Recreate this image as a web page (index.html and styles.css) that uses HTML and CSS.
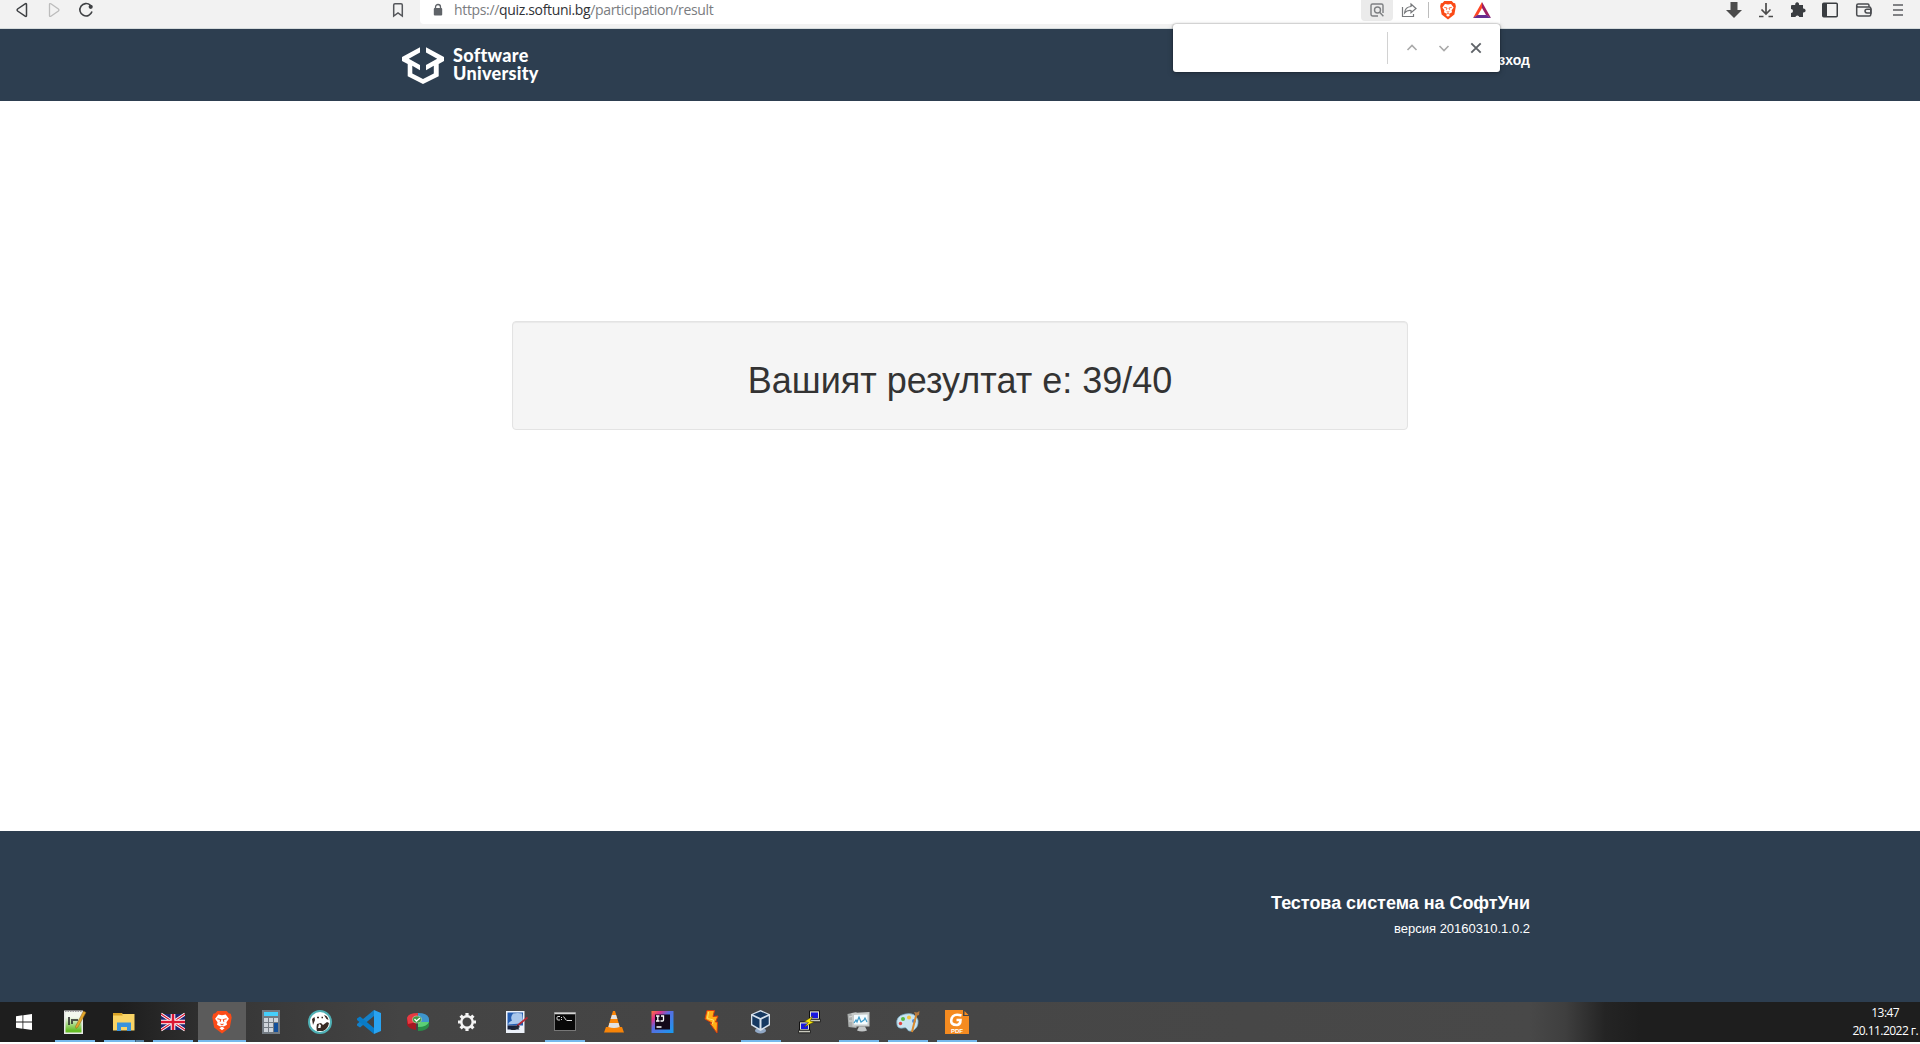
FILE: index.html
```html
<!DOCTYPE html>
<html lang="bg">
<head>
<meta charset="utf-8">
<title>Тестова система на СофтУни</title>
<link rel="stylesheet" href="styles.css">
</head>
<body>
<div class="toolbar">
  <div class="nav">
    <svg width="12" height="16" viewBox="0 0 12 16"><path d="M10.5 2.6v10.8q0 1.6-1.4.8L1.6 9q-1-1 0-2l7.5-5.2q1.4-.8 1.4.8z" fill="none" stroke="#3f4144" stroke-width="1.5"/></svg>
    <svg width="12" height="16" viewBox="0 0 12 16"><path d="M1.5 2.6v10.8q0 1.6 1.4.8L10.4 9q1-1 0-2L2.9 1.800q-1.400-.8-1.400.8z" fill="none" stroke="#bcbcbc" stroke-width="1.300"/></svg>
    <svg class="reload" width="16" height="16" viewBox="0 0 16 16"><path d="M12.300 3.200A6.200 6.200 0 1 0 14 9.600" fill="none" stroke="#3f4144" stroke-width="1.600"/><circle cx="12.700" cy="4.800" r="2.100" fill="#3f4144"/></svg>
  </div>
  <svg class="bookmark" width="12" height="16" viewBox="0 0 12 16"><path d="M1.700 14V3q0-1.300 1.300-1.300h6Q10.300 1.700 10.300 3v11L6 11z" fill="none" stroke="#55575b" stroke-width="1.500"/></svg>
  <div class="address">
    <svg class="lock" width="10" height="14" viewBox="0 0 10 14"><path d="M2.500 6V4a2.500 2.500 0 0 1 5 0v2" fill="none" stroke="#5f6368" stroke-width="1.300"/><rect x=".8" y="5" width="8.400" height="7.500" rx="1" fill="#5f6368"/></svg>
    <span class="url">https://<b>quiz.softuni.bg</b>/participation/result</span>
    <span class="find-toggle"><svg width="16" height="16" viewBox="0 0 16 16" fill="none" stroke="#7d7f82" stroke-width="1.400"><path d="M9 14H4Q2 14 2 12V3.500Q2 2 3.500 2h9Q14 2 14 3.500V11"/><circle cx="8.500" cy="8" r="3"/><path d="M10.600 10.200l3.800 4"/></svg></span>
    <svg class="share" width="16" height="16" viewBox="0 0 16 16" fill="none" stroke="#77797c" stroke-width="1.200"><path d="M1.500 5v9.500h11V12"/><path d="M10 2l5 4.500-5 4.300V8.500Q6 8 3.600 11 4 5 10 4.500z"/></svg>
    <i class="divider"></i>
    <svg class="brave" width="18" height="20" viewBox="0 0 24 26"><use href="#lion"/></svg>
    <svg class="bat" width="18" height="16" viewBox="0 0 18 16"><path d="M9 0L0 16l5-3 4-7z" fill="#ff4724"/><path d="M9 0l9 16-5-3-4-7z" fill="#9e1f63"/><path d="M0 16h18l-4.500-3h-9z" fill="#662d91"/></svg>
  </div>
  <div class="tools">
    <svg width="16" height="16" viewBox="0 0 16 16"><path d="M4.500 0h7v8H16l-8 8-8-8h4.500z" fill="#4b4b4b"/></svg>
    <svg width="16" height="16" viewBox="0 0 16 16" fill="none" stroke="#4b4b4b" stroke-width="1.700"><path d="M8 1v11M3.500 7.500L8 12l4.500-4.500"/><path d="M1 14.500h4.500M10.500 14.500H15"/></svg>
    <svg width="16" height="16" viewBox="0 0 16 16"><path d="M2 3h3.300a2 2 0 1 1 3.700 0H13v3.600a2 2 0 1 1 0 3.800V15H9.300a2 2 0 0 0-3.900 0H1v-4a2 2 0 0 0 0-4V4q0-1 1-1z" fill="#3a3d41"/></svg>
    <svg width="16" height="16" viewBox="0 0 16 16"><rect x=".75" y="1.250" width="14.500" height="13.500" rx="1" fill="none" stroke="#3a3d41" stroke-width="1.500"/><path d="M1 1h4v14H1z" fill="#3a3d41"/></svg>
    <svg class="wallet" width="18" height="16" viewBox="0 0 18 16" fill="none" stroke="#4a4c50" stroke-width="1.500"><path d="M1.700 3.500v9Q1.700 14 3.300 14h11q1.500 0 1.500-1.500v-6Q15.800 5 14.300 5H3.200Q1.700 5 1.700 3.500 1.700 2 3.200 2h9.600q1.200 0 1.200 1.500V5"/><path d="M16 7.300h-4q-2 0-2 1.800t2 1.800h4z"/></svg>
    <svg width="16" height="16" viewBox="0 0 16 16" stroke="#5c5e62" stroke-width="1.500"><path d="M3 3h10M3 8h10M3 13h10"/></svg>
  </div>
  <div class="find">
    <i></i>
    <svg width="12" height="12" viewBox="0 0 12 12" fill="none" stroke="#a9a9a9" stroke-width="1.600"><path d="M1.500 8L6 3.500 10.500 8"/></svg>
    <svg width="12" height="12" viewBox="0 0 12 12" fill="none" stroke="#a9a9a9" stroke-width="1.600"><path d="M1.500 4L6 8.500 10.500 4"/></svg>
    <svg width="12" height="12" viewBox="0 0 12 12" fill="none" stroke="#5f6368" stroke-width="1.900"><path d="M1.300 1.300l9.400 9.400M10.700 1.300l-9.400 9.400"/></svg>
  </div>
</div>

<header class="site-header">
  <div class="container">
    <a class="logo">
      <svg width="42" height="37" viewBox="0 0 42 37" fill="#fff"><path d="M18 .2v5.300L6.800 11.800 18 18v5.200l-7.700-4.400v7.600L21 32l10.800-5.600v-7.600L24 23.200V18l11.200-6.200L24 5.500V.2l18 9.700v4l-5.300 3v12.300L21 37 5.700 29.200V16.900L0 13.900v-4z"/></svg>
      <span>Software<br>University</span>
    </a>
    <a class="logout">Изход</a>
  </div>
</header>

<main><div class="well"><h1>Вашият резултат е: 39/40</h1></div></main>

<footer class="site-footer">
  <div class="container">
    <h4>Тестова система на СофтУни</h4>
    <p>версия 20160310.1.0.2</p>
  </div>
</footer>

<div class="taskbar">
  <div class="start"><svg width="16" height="16" viewBox="0 0 16 16" fill="#fff"><path d="M0 2.200l6.500-.9v6.200H0zM7.300 1.200L16 0v7.500H7.300zM0 8.400h6.500v6.300L0 13.800zM7.300 8.400H16V16l-8.700-1.200z"/></svg></div>
  <div class="task open"><svg viewBox="0 0 24 24"><defs><linearGradient id="gn" x2="0" y2="1"><stop offset=".25" stop-color="#f3f8ee"/><stop offset=".9" stop-color="#65bd26"/></linearGradient></defs><path d="M1 .5h19V24H1z" fill="#e7e7e7"/><path d="M2.500 2h16v20.500h-16z" fill="url(#gn)"/><path d="M2 1h17" stroke="#888" stroke-width="1.500" stroke-dasharray="1.500 1"/><path d="M6 7v8M9 9v5M10 10h5" stroke="#222" stroke-width="1.500"/><path d="M20.500 1L12.500 16.500l.5 2 2-1.500L23 2.500z" fill="#e3a62b" stroke="#8d651d" stroke-width=".5"/></svg></div>
  <div class="task open multi"><svg viewBox="0 0 24 24"><path d="M1 3h8.500l1.500 1H22.500v16.500H1z" fill="#f9d465"/><path d="M1 3h8.500l1.300 2.500H1z" fill="#d9a326"/><path d="M5 21v-8.500h14V21h-4v-4H9v4z" fill="#3993dc"/></svg></div>
  <div class="task open"><svg viewBox="0 0 24 24"><path d="M0 4h24v16H0z" fill="#1d2472"/><path d="M0 4l24 16M24 4L0 20" stroke="#fff" stroke-width="3"/><path d="M0 4l24 16M24 4L0 20" stroke="#db1733" stroke-width="1.200"/><path d="M12 4v16M0 12h24" stroke="#fff" stroke-width="4.600"/><path d="M12 4v16M0 12h24" stroke="#db1733" stroke-width="2.600"/></svg></div>
  <div class="task open active"><svg viewBox="0 0 24 26"><g id="lion"><path d="M7 1h10l2.300 2.500L21.500 4l1 4-2 11L12 25.500 3.500 19l-2-11 1-4 2.200-.5z" fill="#fb4b17"/><path d="M8 5l4 .8L16 5l3.500 4.500-2.700 3.800.6 2.700-3.400 2-2-1-2 1-3.400-2 .6-2.700L4.500 9.500zM12 18l2.800 1.800L12 22l-2.800-2.200z" fill="#fff"/><path d="M7 9.500l3.700.8-.8 2.400M17 9.500l-3.700.8.800 2.400M10.300 15l1.700 1 1.700-1" stroke="#fb4b17" stroke-width="1.100" fill="none"/></g></svg></div>
  <div class="task"><svg viewBox="0 0 24 24"><path d="M3 0h18v24H3z" fill="#737b83"/><path d="M5 2h14v4H5z" fill="#45cffb"/><path d="M5 8h4v4H5zM10 8h4v4h-4zM15 8h4v4h-4zM5 13h4v4H5zM10 13h4v4h-4zM5 18h4v4H5zM10 18h4v4h-4z" fill="#cfd5dc"/><path d="M15 13h4v9h-4z" fill="#12509c"/></svg></div>
  <div class="task"><svg viewBox="0 0 24 24"><circle cx="12" cy="12" r="11" fill="#fff" stroke="#4fb1b6" stroke-width="2"/><path d="M16 5q4 1 4.500 5l-2-1zM4 9l2.500-2 .5 3-2 5zM9 14l4-1 2 2 4-3 2 1q-1 6-6 8H9q-1-3 0-7z" fill="#382923"/><path d="M9 7.500h2M13.500 7.500h1.500" stroke="#382923" stroke-width="1.300"/><path d="M11 14l2 1-.5 3H10z" fill="#fff"/></svg></div>
  <div class="task"><svg viewBox="0 0 24 24"><path d="M17 0v6L3 17.500 0 15.500v-1.500z" fill="#1480c8"/><path d="M0 8.500l3-2L17 18v6L0 10z" fill="#087bc7"/><path d="M17 0l7 3v18l-7 3z" fill="#29a3f1"/></svg></div>
  <div class="task"><svg viewBox="0 0 24 24"><path d="M1 8v7q2 4 9 5V10z" fill="#a31922"/><path d="M1 8q1-5 11-5l-1 9-9 2z" fill="#e83a42"/><path d="M12 3q10 0 11 6v5l-11-3z" fill="#3e96cd"/><path d="M12 13l11-1v4q-2 5-11 5z" fill="#2a8d48"/><path d="M12 12l11 0q-2 5-11 5z" fill="#5bcf75"/><ellipse cx="11" cy="9.500" rx="4.500" ry="3.500" fill="#429a45" stroke="#c5d5bb" stroke-width=".6"/><path d="M8.500 9l2 2 3.500-3" fill="none" stroke="#fff" stroke-width="1.300"/></svg></div>
  <div class="task"><svg viewBox="0 0 24 24"><g fill="none" stroke="#f4f4f4"><circle cx="12" cy="12" r="5.700" stroke-width="2.400"/><path d="M12 6V3M12 18v3M6 12H3M18 12h3M7.800 7.800L5.600 5.600M16.200 7.800l2.200-2.200M7.800 16.200l-2.200 2.200M16.200 16.200l2.200 2.200" stroke-width="3.200"/></g></svg></div>
  <div class="task"><svg viewBox="0 0 24 24"><path d="M2 1h18.500v22H2z" fill="#edf2fa"/><path d="M3.500 2.500h15.500v13h-15.500z" fill="#235db2"/><path d="M9 3.500q5-1 9 0l1 8-3 2-12 1q1-3 4-4-2-3 1-7z" fill="#a9c7ec"/><path d="M3.500 15.500h9l3 4h-12z" fill="#16213e"/><path d="M23.500 7.500L13 16" stroke="#b52a35" stroke-width="1.800"/><path d="M14 15l-8 5h5l5-3z" fill="#222733"/></svg></div>
  <div class="task open"><svg viewBox="0 0 24 24"><path d="M1 2h22v19H1z" fill="#777"/><path d="M2 4.500h20v15.500H2z" fill="#080808"/><path d="M1.500 2.500h21v1.500h-21z" fill="#d4d4d4"/><path d="M7 6.500H5q-1 0-1 1V9q0 1 1 1h2M8.500 7v1M8.500 9v1M10.500 6.500l3 4M14 10.500h5" stroke="#ddd" fill="none"/></svg></div>
  <div class="task"><svg viewBox="0 0 24 24"><path d="M4 17h16l2 5.500H2z" fill="#f78408"/><path d="M11 1h2l5.500 18q-6.500 3-13 0z" fill="#fa8507"/><path d="M9.900 5h4.200l1.300 4H8.600zM7.400 13h9.200l1 4q-5.600 2-11.200 0z" fill="#e2e2e2"/></svg></div>
  <div class="task"><svg viewBox="0 0 24 24"><defs><linearGradient id="ij" x2="1" y2="1"><stop stop-color="#ff7840"/><stop offset=".22" stop-color="#e0338a"/><stop offset=".42" stop-color="#5b6be0"/><stop offset="1" stop-color="#159cf0"/></linearGradient></defs><path d="M.5 1h22v22H.5z" fill="url(#ij)"/><path d="M4 4.500h15v15H4z" fill="#130818"/><path d="M5 6h3.500M6.800 6v5M5 11h3.500M10 6h2.500v4q0 1-1 1H9.500M5.500 17h5" fill="none" stroke="#fff" stroke-width="1.300"/></svg></div>
  <div class="task"><svg viewBox="0 0 24 24"><path d="M7 .5h7.500l-1.500 6 5-.5-2.500 6h2l-.5 11-7-9.500 2-.5-7-4z" fill="#ffae16" stroke="#d93b0e"/><path d="M8.500 2l-1 6.500 6 1.500-1 4" fill="none" stroke="#ffe26a"/></svg></div>
  <div class="task open"><svg viewBox="0 0 24 24"><ellipse cx="11.500" cy="20.500" rx="5.500" ry="3" fill="#91a8c5"/><path d="M11.500 0L21 4.300v11L11.500 21 2 15.300v-11z" fill="#d7e2ed"/><path d="M11.500 1.500L19 4.500 11.500 8 4 4.500zM3.300 6l7.200 3.500v9l-7.200-4.300zM19.700 6l-7.200 3.500v9l7.200-4.300z" fill="#163961"/></svg></div>
  <div class="task"><svg viewBox="0 0 24 24"><g id="pc"><path d="M11.500.8h10v8.500h-10z" fill="#e0e0d2" stroke="#111"/><path d="M13 2.500h7v5.500h-7z" fill="#1717df"/><path d="M10.500 9.300h12v2.500h-12z" fill="#c9c9bd" stroke="#111" stroke-width=".8"/></g><use href="#pc" x="-10" y="11"/><path d="M15 6l-8.500 5.500 4 1L6 17l10-5-4-1z" fill="#ffed00" stroke="#443d00" stroke-width=".5"/></svg></div>
  <div class="task open"><svg viewBox="0 0 24 24"><path d="M.5 4l9-2v16l-8-1z" fill="#aaaead"/><path d="M2 7l6-1M2 11h6" stroke="#ddd"/><path d="M4.500 3l18-1v14.500h-17z" fill="#c6cac9"/><path d="M7 5l13.500-.5V14.500H7z" fill="#f4fcff"/><path d="M7 13l2-3 1 2 2-5 2 5 3-2 1-2 2 4" fill="none" stroke="#3e9bc9" stroke-width="1.200"/><path d="M12 16.500h6l2 4q-5 2-10 0z" fill="#c3c7c8"/></svg></div>
  <div class="task open"><svg viewBox="0 0 24 24"><path d="M1 15Q-1 6 9 4t13 6q1 8-6 11-4 1-5-2-1-2-4-1-5 1-6-3z" fill="#c9e4f1" stroke="#6fa4bf" stroke-width=".7"/><circle cx="7" cy="9" r="2" fill="#55b943"/><circle cx="13" cy="7.500" r="2" fill="#f3c43f"/><circle cx="4.500" cy="13.500" r="1.700" fill="#dd4541"/><circle cx="18" cy="11" r="2" fill="#4b88d4"/><path d="M20.500 4L16 22" stroke="#d8892d" stroke-width="2"/><path d="M18 2l3 .5L23.500 1l-.5 4-3 1z" fill="#b67b42"/></svg></div>
  <div class="task open"><svg viewBox="0 0 24 24"><path d="M0 0h18v6h6v18H0z" fill="#f58b20"/><path d="M19.500 1l4 4h-4z" fill="#f58b20"/><path d="M16.500 5.500Q8 3 6.500 9T12 15q3.500-.5 3.500-5h-4" fill="none" stroke="#fff" stroke-width="2.600"/><text x="12" y="22.500" text-anchor="middle" class="pdf">PDF</text></svg></div>
  <div class="clock">13:47<br>20.11.2022 г.</div>
</div>
</body>
</html>
```
FILE: styles.css
```css
* { box-sizing: border-box; }
body {
  margin: 0;
  height: 1044px;
  display: flex;
  flex-direction: column;
  background: #fff;
  color: #333;
  font: 14px/20px "Liberation Sans", Arial, sans-serif;
  overflow: hidden;
}
svg { display: block; flex: none; }

/* Browser toolbar */
.toolbar {
  position: relative;
  display: flex;
  flex: none;
  height: 29px;
  background: #f2f2f2;
  border-bottom: 1px solid #d5dbdc;
}
.nav { display: flex; gap: 20px; padding: 2px 0 0 16px; width: 392px; }
.reload { margin-left: -2px; }
.bookmark { margin-top: 2px; }
.address {
  display: flex;
  width: 1080px;
  height: 24px;
  margin-left: 16px;
  padding-left: 13px;
  background: #fff;
  border-bottom-left-radius: 4px;
}
.lock { margin-top: 3px; }
.url {
  width: 907px;
  margin-left: 11px;
  color: #7a7c7f;
  font: 14px/20px "Open Sans", "Noto Sans", sans-serif;
  letter-spacing: -.34px;
}
.url b { font-weight: 400; color: #303236; }
.find-toggle {
  width: 32px;
  height: 21px;
  padding: 2px 8px;
  background: #ebebeb;
  border-radius: 0 0 4px 4px;
}
.share { margin: 2px 0 0 8px; }
.divider { width: 1px; height: 16px; margin: 2px 0 0 11px; background: #bdbdbd; }
.brave { margin-left: 10px; }
.bat { margin: 2px 0 0 16px; }
.tools { display: flex; gap: 16px; padding: 2px 0 0 226px; }
.wallet { margin: 0 1px; }
.find {
  position: absolute;
  left: 1173px;
  top: 24px;
  z-index: 2;
  display: flex;
  align-items: center;
  justify-content: flex-end;
  gap: 20px;
  width: 327px;
  height: 48px;
  padding-right: 18px;
  background: #fff;
  border-radius: 3px;
  box-shadow: 0 0 2px rgba(0, 0, 0, .5), 0 2px 6px rgba(0, 0, 0, .2);
}
.find i { width: 1px; height: 32px; background: #d2d2d2; margin-right: -2px; }

/* Page */
.site-header { flex: none; height: 72px; background: #2d3e50; }
.container { width: 1170px; margin: 0 auto; padding: 0 15px; color: #fff; }
.site-header .container { display: flex; justify-content: space-between; }
.logo { display: flex; gap: 9px; padding: 18px 0 0 12px; }
.logo span { margin-top: -1px; font: 900 18px/18px Lato, sans-serif; letter-spacing: .3px; }
.logout { padding-top: 21px; font-weight: 700; }
main { flex: none; height: 730px; padding-top: 220px; }
.well {
  width: 896px;
  margin: 0 auto;
  padding: 19px;
  background: #f5f5f5;
  border: 1px solid #e3e3e3;
  border-radius: 4px;
  box-shadow: inset 0 1px 1px rgba(0, 0, 0, .05);
}
h1 { margin: 20px 0 10px; font-size: 36px; font-weight: 400; line-height: 39px; text-align: center; }
.site-footer { flex: none; height: 171px; padding-top: 62px; background: #2d3e50; text-align: right; }
h4 { margin: 0; font-size: 18px; line-height: 20px; letter-spacing: -.03px; }
p { margin: 6px 0 0; font-size: 13px; }

/* Taskbar */
.taskbar {
  display: flex;
  flex: none;
  gap: 1px;
  height: 40px;
  background: linear-gradient(90deg, #1e1e1e 120px, #383838 245px, #444 400px, #484848 1530px, #3f3f3f 1565px, #242424 1605px, #1e1e1e 1640px);
}
.start { width: 50px; padding: 12px 16px; }
.task { position: relative; width: 48px; padding: 8px 12px; }
.task svg { width: 24px; height: 24px; }
.task.open::after {
  content: "";
  position: absolute;
  left: 4px;
  right: 4px;
  bottom: 0;
  height: 2px;
  background: #76b9ed;
}
.task.multi::after { background: linear-gradient(90deg, #76b9ed 31px, #40607a 31px, #40607a 32px, #5986aa 32px); }
.task.active { background: #5b5b5b; }
.task.active::after { left: 0; right: 0; }
.pdf { font: 700 6px "Liberation Sans", sans-serif; fill: #fff; }
.clock {
  margin-left: auto;
  padding: 2px 2px 0 0;
  color: #fff;
  font: 12px/18px "Open Sans", "Noto Sans", sans-serif;
  letter-spacing: -.55px;
  text-align: center;
}
```
